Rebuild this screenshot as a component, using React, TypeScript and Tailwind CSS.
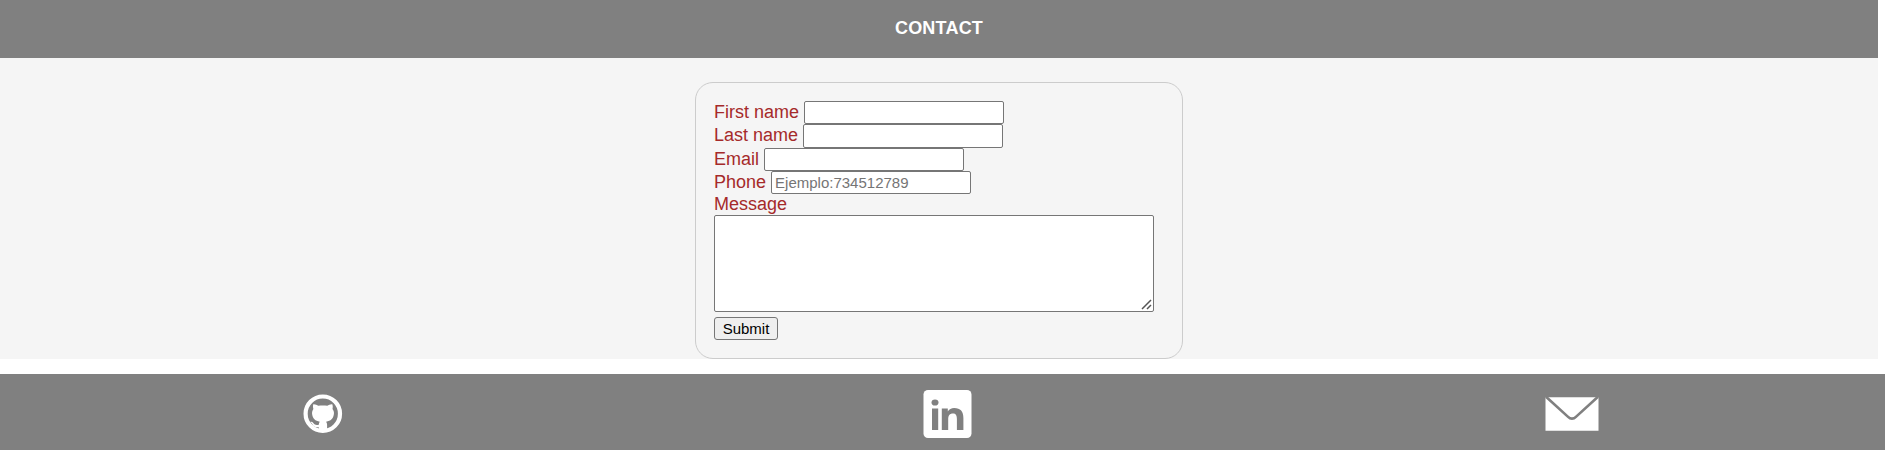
import React from "react";

const inputClass =
  "box-border w-[200px] self-stretch rounded-[2px] border border-[#767676] bg-white px-[3px] text-[15px] leading-none text-black placeholder:text-[#757575] outline-none";

type FieldProps = { id: string; label: string; height: string; labelClass?: string; placeholder?: string };

function Field({ id, label, height, labelClass = "", placeholder }: FieldProps) {
  return (
    <div className={`flex items-center gap-[5px] ${height}`}>
      <label htmlFor={id} className={`leading-[21px] ${labelClass}`}>{label}</label>
      <input id={id} className={inputClass} placeholder={placeholder} />
    </div>
  );
}

export default function App() {
  return (
    <div className="h-[450px] overflow-hidden bg-white font-['Liberation_Sans',Arial,sans-serif]">
      <header className="flex h-[58px] w-[1878px] items-center justify-center bg-[#808080] pb-px">
        <h2 className="text-[18px] font-bold leading-[21px] tracking-[0.2px] text-white">CONTACT</h2>
      </header>
      <main className="flex h-[301px] w-[1878px] justify-center bg-[#f5f5f5] pt-6">
        <form className="h-[277px] w-[488px] rounded-[18px] border border-[#cccccc] px-[18px] pt-[18px] text-[18px] text-[#a52a2a]">
          <Field id="first" label="First name" height="h-[23px]" />
          <Field id="last" label="Last name" height="h-[24px]" labelClass="pb-[2px]" />
          <Field id="email" label="Email" height="h-[23px]" />
          <Field id="phone" label="Phone" height="h-[23px]" placeholder="Ejemplo:734512789" />
          <label htmlFor="message" className="block h-[21px] leading-[21px]">Message</label>
          <div className="relative h-[97px] w-[440px]">
            <textarea
              id="message"
              className="block h-full w-full resize-none rounded-[2px] border border-[#767676] bg-white outline-none"
            />
            <svg className="pointer-events-none absolute bottom-[2px] right-[2px] h-[11px] w-[11px]" viewBox="0 0 11 11">
              <path d="M1 10 10 1M6 10l4-4" stroke="#555555" strokeWidth="1.500" />
            </svg>
          </div>
          <button
            type="button"
            className="mt-[5px] flex h-[23px] w-[64px] items-center justify-center rounded-[3px] border border-[#767676] bg-[#efefef] text-[15px] leading-none text-black"
          >
            Submit
          </button>
        </form>
      </main>
      <footer className="mt-[15px] flex h-[76px] items-start bg-[#808080]">
        <svg className="ml-[303px] mt-5 h-10 w-10" viewBox="0 0 40 40" fill="white" aria-label="GitHub">
          <circle cx="19.800" cy="19.700" r="17.2" fill="none" stroke="white" strokeWidth="4.200" />
          <path d="M10.300 10.300c1.800-.2 3.600.6 5 1.500 3-.5 6-.5 9 0 1.400-.9 3.200-1.700 5-1.500.6 1.500.6 3.200.2 4.600 1.200 1.500 1.700 3.200 1.400 5.200-.5 4.600-3.100 7-7.800 7.700.7.900 1 1.900 1 3V37.500h-8.300v-4.300c-4 .5-5.400-.8-6.500-2.900-.5-1-1.200-1.600-2-2.300 1.100-.5 2.200 0 3.200 1.200 1.200 1.600 2.500 2 5.300 1.500.1-1.200.3-2.200 1-3-4.500-.6-7.200-3-7.700-7.600-.2-2 .2-3.700 1.300-5.200-.5-1.400-.6-3.100-.1-4.600Z" />
        </svg>
        <svg className="ml-[580px] mt-4 h-12 w-[49px]" viewBox="0 0 49 48" aria-label="LinkedIn">
          <rect x="0.500" y="0" width="48" height="48" rx="4.500" fill="white" />
          <ellipse cx="12" cy="12.500" rx="3.500" ry="3.100" fill="#808080" />
          <path d="M9 18.500h6.200V40H9ZM18.800 18.500h6v2.900c1.300-2.200 3.500-3.500 6.400-3.500 6.300 0 9.200 3.400 9.200 10V40h-6.500V29c0-3.600-1-5.600-4-5.600-3.200 0-4.700 2.100-4.700 5.700V40h-6.400Z" fill="#808080" />
        </svg>
        <svg className="ml-[573px] mt-[23px] h-[34px] w-[54px]" viewBox="0 0 54 34" aria-label="Email">
          <path d="M.5.200h53v33.600H.5Z" fill="white" />
          <path d="M1-.3 22.800 19.600Q27 23.800 31.200 19.600L53-.3" fill="none" stroke="#808080" strokeWidth="2.600" />
        </svg>
      </footer>
    </div>
  );
}
